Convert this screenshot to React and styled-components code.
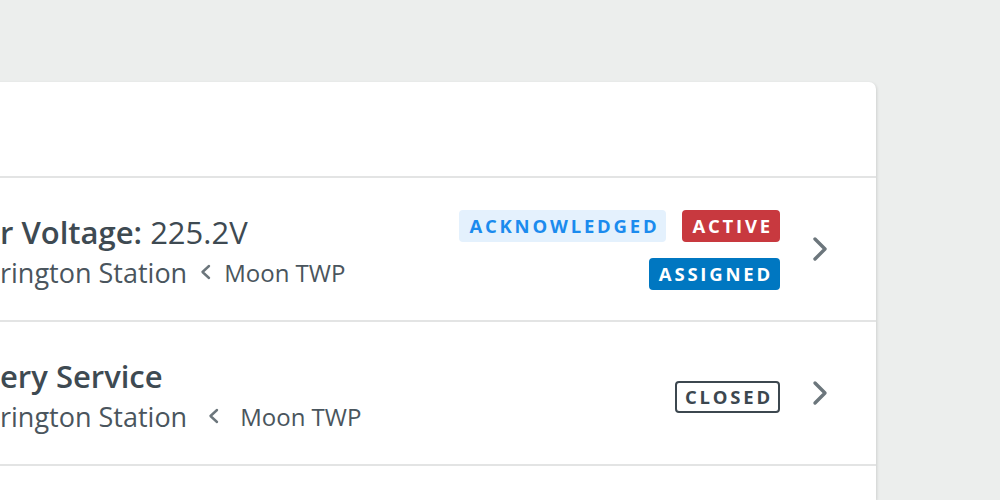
import React from "react";
import styled, { createGlobalStyle } from "styled-components";

const Global = createGlobalStyle`
  html, body { margin: 0; padding: 0; }
  body {
    background: #eceeed;
    font-family: "Open Sans", "Liberation Sans", sans-serif;
    overflow: hidden;
    width: 1000px;
    height: 500px;
  }
`;

const Page = styled.div`
  padding-top: 82px;
  height: 500px;
  box-sizing: border-box;
  overflow: hidden;
`;

const Card = styled.div`
  margin-left: -12px;
  width: 888px;
  height: 100%;
  background: #ffffff;
  border-radius: 7px 7px 0 0;
  box-shadow: 1px 1px 3px rgba(0, 0, 0, 0.12);
`;

const Header = styled.div`
  height: 94px;
  border-bottom: 2px solid #e3e4e4;
`;

const Row = styled.div`
  display: flex;
  align-items: center;
  height: 142px;
  padding: 0 48px 0 12px;
  border-bottom: 2px solid #e3e4e4;
`;

const Info = styled.div`
  flex: 1;
  display: flex;
  flex-direction: column;
  padding-top: 6px;
  color: #3e4a52;
`;

const Title = styled.div`
  font-size: 31px;
  line-height: 40px;
  white-space: nowrap;
  b { font-weight: 600; }
`;

const Sub = styled.div`
  display: flex;
  align-items: center;
  font-size: 27px;
  line-height: 41px;
  white-space: nowrap;
  color: #4a555d;
`;

const Loc = styled.span`
  font-size: 24px;
  margin-left: ${(p) => p.$gap}px;
`;

const Crumb = styled.svg`
  margin-left: ${(p) => p.$gap}px;
  width: 11px;
  height: 16px;
  flex: none;
`;

const Badges = styled.div`
  display: flex;
  flex-direction: column;
  align-items: flex-end;
  gap: 16px;
  padding-top: 2px;
`;

const BadgeLine = styled.div`
  display: flex;
  gap: 16px;
`;

const variants = {
  ack: { bg: "#e4f1fd", fg: "#1b8bee", border: "#e4f1fd" },
  active: { bg: "#c8393f", fg: "#ffffff", border: "#c8393f" },
  assigned: { bg: "#0077c1", fg: "#ffffff", border: "#0077c1" },
  closed: { bg: "#ffffff", fg: "#3c474f", border: "#3c474f" },
};

const Badge = styled.span`
  display: inline-flex;
  align-items: center;
  box-sizing: border-box;
  height: 32px;
  padding: 0 5px 0 8px;
  margin-top: ${(p) => (p.$kind === "closed" ? 8 : 0)}px;
  border-radius: 4px;
  border: 2px solid ${(p) => variants[p.$kind].border};
  background: ${(p) => variants[p.$kind].bg};
  color: ${(p) => variants[p.$kind].fg};
  font-size: 18.5px;
  font-weight: 700;
  letter-spacing: 2.8px;
  line-height: 1;
`;

const Chevron = styled.svg`
  margin-left: 32px;
  width: 16px;
  height: 26px;
  flex: none;
`;

const ChevronRight = () => (
  <Chevron viewBox="0 0 16 26">
    <path d="M3 3 L13 13 L3 23" fill="none" stroke="#6c767c" strokeWidth="3.4" strokeLinecap="round" strokeLinejoin="round" />
  </Chevron>
);

const ChevronLeft = ({ gap }) => (
  <Crumb $gap={gap} viewBox="0 0 11 16">
    <path d="M9 2 L2.5 8 L9 14" fill="none" stroke="#6c767c" strokeWidth="2.4" strokeLinecap="round" strokeLinejoin="round" />
  </Crumb>
);

export default function App() {
  return (
    <>
      <Global />
      <Page>
        <Card>
          <Header />
          <Row>
            <Info>
              <Title>
                <b>r Voltage:</b> 225.2V
              </Title>
              <Sub>
                rington Station
                <ChevronLeft gap={13} />
                <Loc $gap={13}>Moon TWP</Loc>
              </Sub>
            </Info>
            <Badges>
              <BadgeLine>
                <Badge $kind="ack">ACKNOWLEDGED</Badge>
                <Badge $kind="active">ACTIVE</Badge>
              </BadgeLine>
              <Badge $kind="assigned">ASSIGNED</Badge>
            </Badges>
            <ChevronRight />
          </Row>
          <Row>
            <Info>
              <Title>
                <b>ery Service</b>
              </Title>
              <Sub>
                rington Station
                <ChevronLeft gap={21} />
                <Loc $gap={21}>Moon TWP</Loc>
              </Sub>
            </Info>
            <Badge $kind="closed">CLOSED</Badge>
            <ChevronRight />
          </Row>
        </Card>
      </Page>
    </>
  );
}
